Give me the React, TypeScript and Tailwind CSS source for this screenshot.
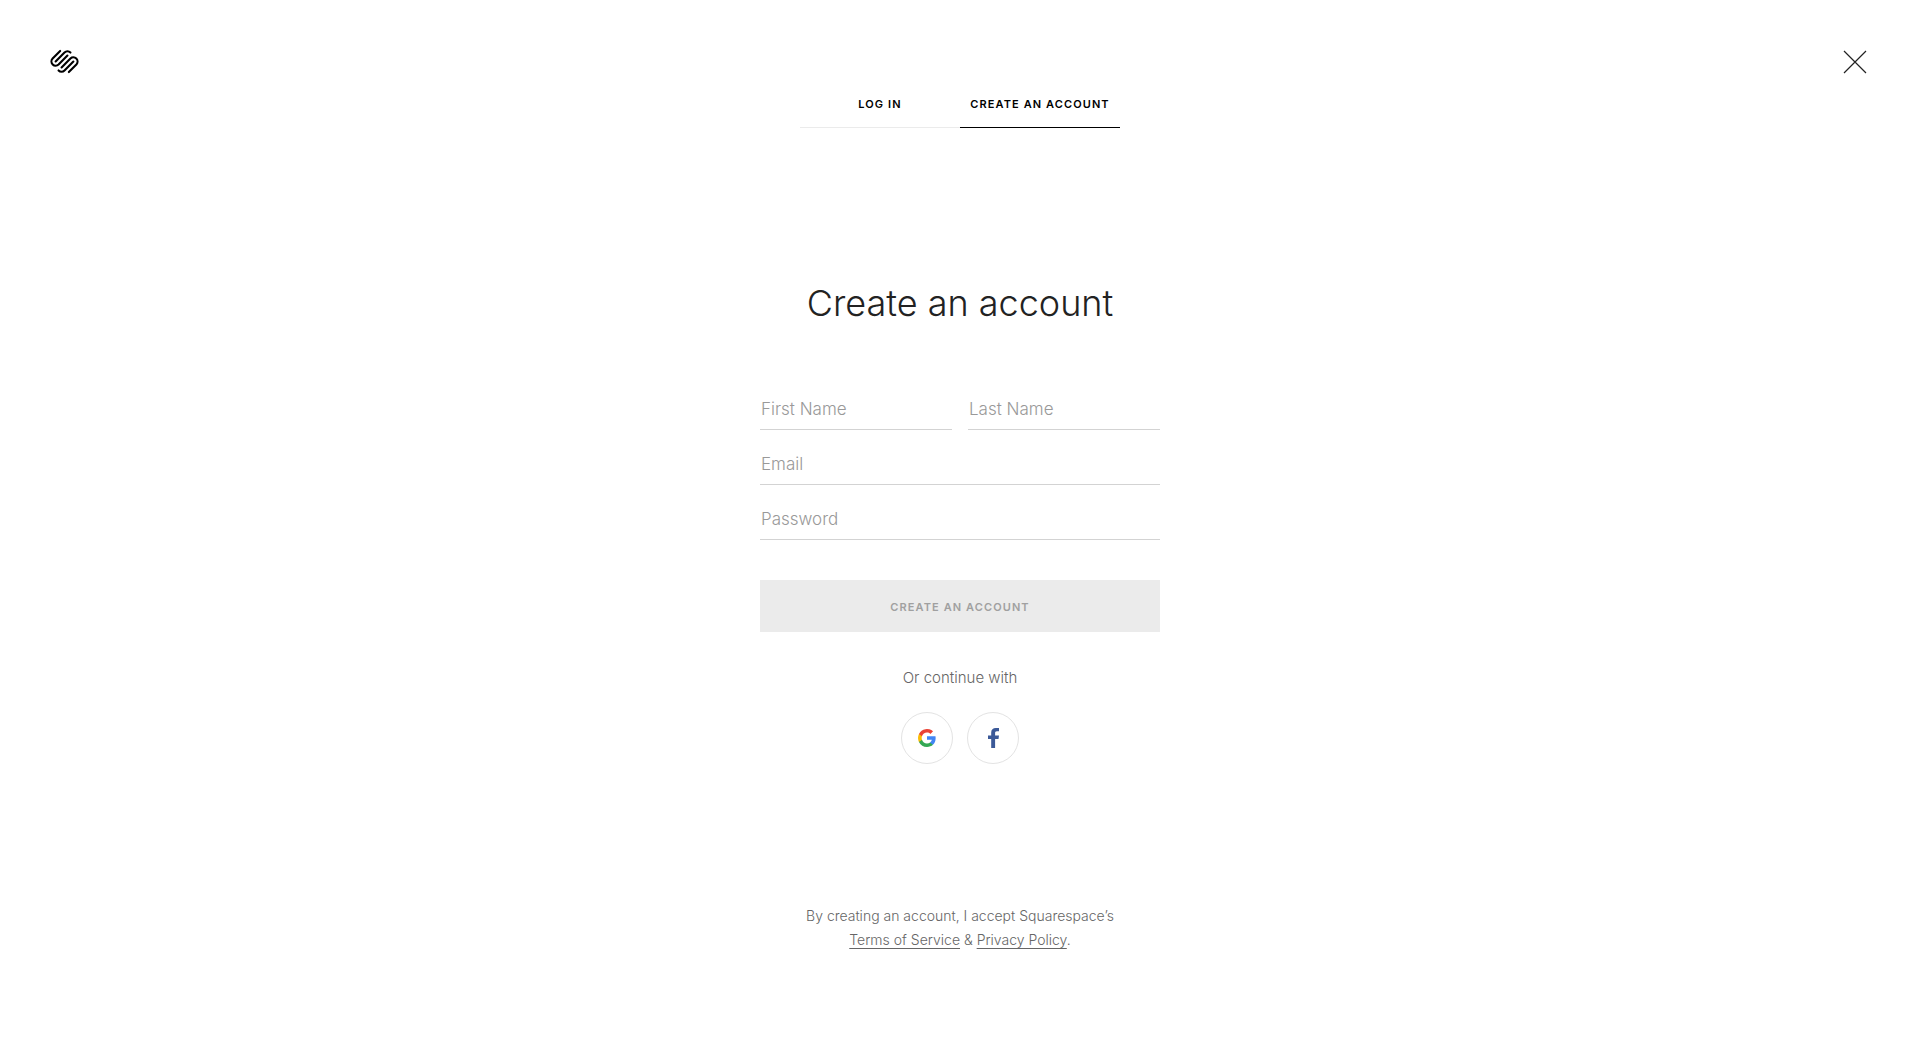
import { useState } from 'react';
import type { ComponentProps, ReactNode } from 'react';

type Tab = 'login' | 'signup';

const TABS: { id: Tab; label: string }[] = [
  { id: 'login', label: 'Log in' },
  { id: 'signup', label: 'Create an account' },
];

function Logo() {
  return (
    <svg className="size-[29px]" viewBox="0 0 24 24" fill="none" stroke="currentColor" strokeWidth="1.75" strokeLinecap="round">
      <path d="M4.65 12L12 4.65a3.48 3.48 0 0 1 4.92 0" />
      <path d="M14.44 7.1L7.09 14.45a3.48 3.48 0 0 1-4.92-4.92L8.4 3.3" />
      <path d="M19.35 12L12 19.35a3.48 3.48 0 0 1-4.92 0" />
      <path d="M9.56 16.9l7.35-7.35a3.48 3.48 0 0 1 4.92 4.92L15.6 20.7" />
    </svg>
  );
}

function GoogleIcon() {
  return (
    <svg className="size-[18px]" viewBox="0 0 18 18">
      <path fill="#4285f4" d="M17.64 9.2c0-.63-.06-1.25-.16-1.84H9v3.48h4.84a4.14 4.14 0 0 1-1.8 2.72v2.26h2.92c1.7-1.57 2.68-3.88 2.68-6.62z" />
      <path fill="#34a853" d="M9 18c2.43 0 4.47-.8 5.96-2.18l-2.91-2.26c-.81.54-1.84.86-3.05.86-2.34 0-4.33-1.58-5.04-3.71H.96v2.33A9 9 0 0 0 9 18z" />
      <path fill="#fbbc05" d="M3.96 10.71A5.4 5.4 0 0 1 3.68 9c0-.6.1-1.17.28-1.71V4.96H.96A9 9 0 0 0 0 9c0 1.45.35 2.83.96 4.04l3-2.33z" />
      <path fill="#ea4335" d="M9 3.58c1.32 0 2.5.45 3.44 1.35l2.58-2.59A9 9 0 0 0 .96 4.96l3 2.33C4.67 5.16 6.66 3.58 9 3.58z" />
    </svg>
  );
}

function Field({ label, ...props }: { label: string } & ComponentProps<'input'>) {
  return (
    <input
      aria-label={label}
      placeholder={label}
      className="w-full min-w-0 h-10 px-px pb-0.5 border-b border-[#d3d3d3] bg-transparent text-[17px] text-[#222] placeholder:text-[#999] font-light outline-none focus:border-black"
      {...props}
    />
  );
}

function SocialButton({ label, children }: { label: string; children: ReactNode }) {
  return (
    <button
      type="button"
      aria-label={label}
      className="size-[52px] rounded-full border border-[#e3e3e3] flex items-center justify-center hover:border-[#b0b0b0]"
    >
      {children}
    </button>
  );
}

export default function App() {
  const [tab, setTab] = useState<Tab>('signup');

  return (
    <div className="min-h-screen bg-white font-['Inter','Liberation_Sans',sans-serif]">
      {/* Header */}
      <header className="grid grid-cols-[1fr_minmax(0,320px)_1fr] items-start px-[50px] pt-[47px]">
        <a href="#home" aria-label="Squarespace" className="justify-self-start text-black">
          <Logo />
        </a>
        <nav className="flex mt-[33px]">
          {TABS.map(t => (
            <button
              key={t.id}
              type="button"
              onClick={() => setTab(t.id)}
              className={`flex-1 h-12 pt-0.5 border-b text-[11px] font-semibold uppercase tracking-widest whitespace-nowrap text-black ${
                tab === t.id ? 'border-black' : 'border-[#ebebeb]'
              }`}
            >
              {t.label}
            </button>
          ))}
        </nav>
        <button type="button" aria-label="Close" className="justify-self-end size-[30px] flex items-center justify-center">
          <svg className="size-6" viewBox="0 0 24 24" fill="none" stroke="#222" strokeWidth="1.2">
            <path d="M1 1l22 22M23 1L1 23" />
          </svg>
        </button>
      </header>

      <main className="mx-auto max-w-[400px] flex flex-col items-center text-center">
        <h1 className="mt-[151px] text-4xl leading-[48px] font-light text-[#222]">Create an account</h1>

        <form className="w-full mt-[63px] flex flex-col gap-[15px]" onSubmit={e => e.preventDefault()}>
          <div className="flex gap-4">
            <Field label="First Name" type="text" />
            <Field label="Last Name" type="text" />
          </div>
          <Field label="Email" type="email" />
          <Field label="Password" type="password" />
          <button
            type="submit"
            disabled
            className="w-full h-[52px] mt-[25px] pt-0.5 bg-[#ebebeb] text-[11px] font-semibold uppercase tracking-widest text-[#a0a0a0]"
          >
            Create an account
          </button>
        </form>

        {/* Social sign up */}
        <p className="mt-9 text-[15px] leading-5 font-light text-[#666]">Or continue with</p>
        <div className="mt-6 flex gap-[14px]">
          <SocialButton label="Continue with Google">
            <GoogleIcon />
          </SocialButton>
          <SocialButton label="Continue with Facebook">
            <svg className="w-[11px] h-5" viewBox="0 0 11 20" fill="#3b5998">
              <path d="M3.2 20V11H0V7.4h3.2V4.6C3.2 1.6 5 0 7.8 0H11v3.3H8.9C7.5 3.3 7.1 4 7.1 5v2.4H11L10.5 11H7.1v9z" />
            </svg>
          </SocialButton>
        </div>

        <p className="mt-[140px] mb-10 text-sm leading-6 font-light text-[#666]">
          By creating an account, I accept Squarespace’s
          <br />
          <a href="#terms" className="underline underline-offset-3">Terms of Service</a> &amp;{' '}
          <a href="#privacy" className="underline underline-offset-3">Privacy Policy</a>.
        </p>
      </main>
    </div>
  );
}
